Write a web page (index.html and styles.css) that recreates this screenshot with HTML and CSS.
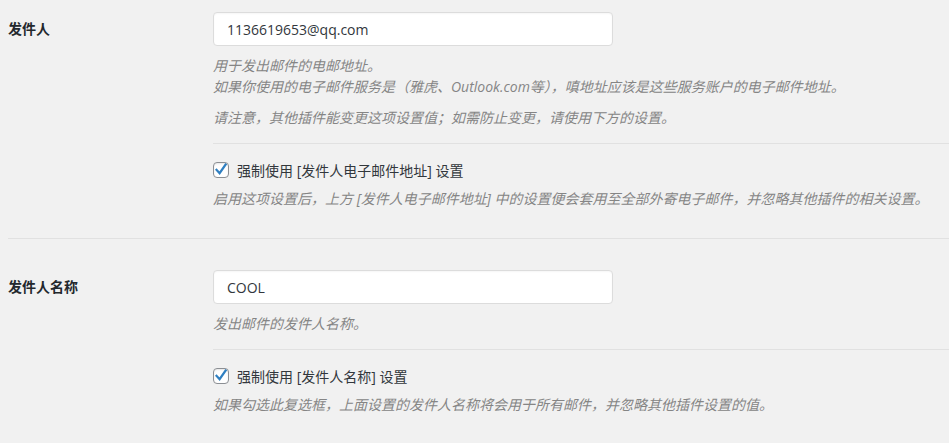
FILE: index.html
```html
<!DOCTYPE html>
<html lang="zh-CN">
<head>
<meta charset="utf-8">
<title>发件人设置</title>
<link rel="stylesheet" href="styles.css">
</head>
<body>
<div class="settings">
  <div class="row row-first">
    <div class="label-col"><label class="row-label" for="from-email">发件人</label></div>
    <div class="field-col">
      <input id="from-email" class="text-input" type="text" value="1136619653@qq.com">
      <p class="desc">用于发出邮件的电邮地址。<br>如果你使用的电子邮件服务是（雅虎、Outlook.com等），嗔地址应该是这些服务账户的电子邮件地址。</p>
      <p class="desc desc-gap">请注意，其他插件能变更这项设置值；如需防止变更，请使用下方的设置。</p>
      <div class="sub-sep"></div>
      <label class="check">
        <span class="box"><svg viewBox="0 0 16 16" width="16" height="16" aria-hidden="true"><path d="M3.6 7.9 L6.6 11.2 L12.6 2.6" fill="none" stroke="#2f7fc1" stroke-width="2.3" stroke-linecap="square" stroke-linejoin="miter"/></svg></span>
        <span class="check-text">强制使用 [发件人电子邮件地址] 设置</span>
      </label>
      <p class="desc desc-check">启用这项设置后，上方 [发件人电子邮件地址] 中的设置便会套用至全部外寄电子邮件，并忽略其他插件的相关设置。</p>
    </div>
  </div>
  <div class="row">
    <div class="label-col"><label class="row-label" for="from-name">发件人名称</label></div>
    <div class="field-col">
      <input id="from-name" class="text-input" type="text" value="COOL">
      <p class="desc">发出邮件的发件人名称。</p>
      <div class="sub-sep"></div>
      <label class="check">
        <span class="box"><svg viewBox="0 0 16 16" width="16" height="16" aria-hidden="true"><path d="M3.6 7.9 L6.6 11.2 L12.6 2.6" fill="none" stroke="#2f7fc1" stroke-width="2.3" stroke-linecap="square" stroke-linejoin="miter"/></svg></span>
        <span class="check-text">强制使用 [发件人名称] 设置</span>
      </label>
      <p class="desc desc-check">如果勾选此复选框，上面设置的发件人名称将会用于所有邮件，并忽略其他插件设置的值。</p>
    </div>
  </div>
</div>
</body>
</html>
```

FILE: styles.css
```css
html, body {
  margin: 0;
  padding: 0;
  background: #f1f1f1;
}

body {
  font-family: "Open Sans", "Noto Sans CJK SC", sans-serif;
  font-size: 14px;
  color: #32373c;
  overflow: hidden;
}

.settings {
  padding-left: 8px;
}

.row {
  display: flex;
  padding: 31px 0 29px;
  border-bottom: 1px solid #e1e1e1;
}

.row-first {
  padding-top: 12px;
}

.label-col {
  width: 205px;
  flex: none;
  height: 34px;
  display: flex;
  align-items: center;
  padding-bottom: 3px;
  box-sizing: border-box;
}

.row-label {
  font-weight: 700;
  font-size: 14px;
  color: #23282d;
}

.field-col {
  flex: 1;
  min-width: 0;
}

.text-input {
  display: block;
  box-sizing: border-box;
  width: 400px;
  height: 34px;
  margin: 0;
  padding: 0 13px;
  border: 1px solid #dcdcdc;
  border-radius: 4px;
  background: #fff;
  box-shadow: inset 0 1px 2px rgba(0, 0, 0, 0.04);
  font-family: "Open Sans", "Noto Sans CJK SC", sans-serif;
  font-size: 14px;
  color: #32373c;
  outline: none;
}

.desc {
  margin: 9px 0 0;
  font-size: 14px;
  line-height: 21px;
  font-style: italic;
  color: #858585;
}

.desc-gap {
  margin-top: 10px;
}

.sub-sep {
  height: 1px;
  background: #e1e1e1;
  margin: 15px 0;
}

.check {
  display: flex;
  align-items: center;
  height: 21px;
  gap: 8px;
  color: #32373c;
  font-size: 14px;
}

.box {
  box-sizing: border-box;
  width: 16px;
  height: 16px;
  flex: none;
  border: 1px solid #8c8f94;
  border-radius: 4px;
  background: #fff;
  box-shadow: inset 0 1px 2px rgba(0, 0, 0, 0.1);
  position: relative;
}

.box svg {
  position: absolute;
  left: -1px;
  top: -1px;
}

.desc-check {
  margin-top: 8px;
}
```
